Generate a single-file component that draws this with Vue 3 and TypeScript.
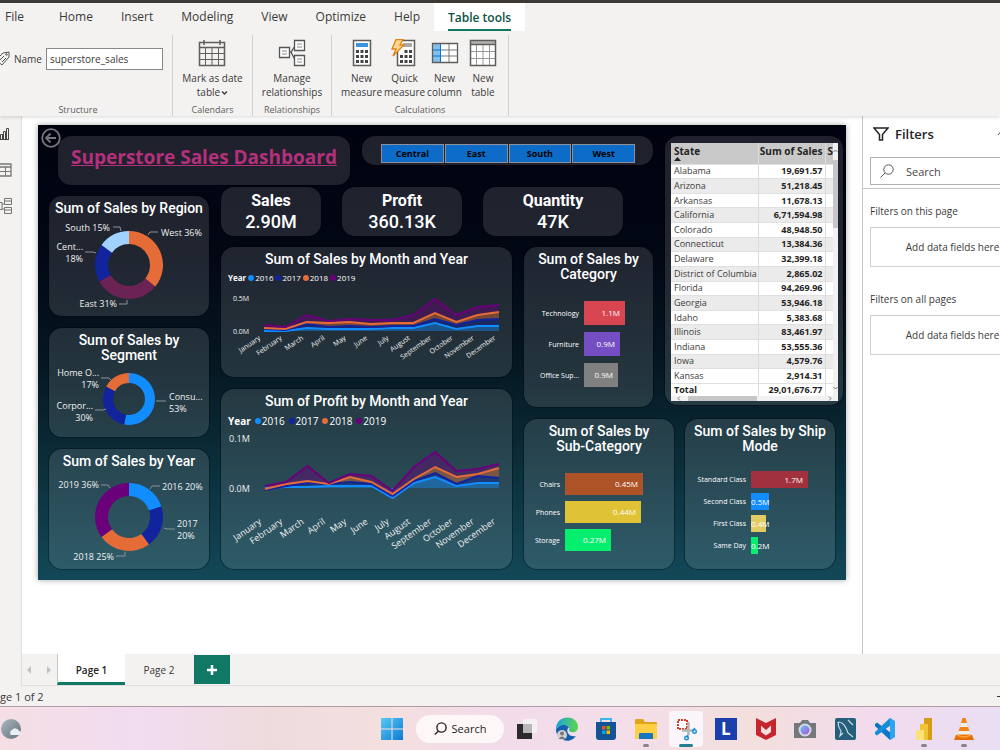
<script setup lang="ts">
interface Slice { share: number; color: string }
interface Note { x: number; y: number; text: string; anchor: 'start' | 'middle' | 'end' }
interface Donut { title: string; size: string; top: number; height: number; cy: number; outer: number; inner: number; slices: Slice[]; notes: Note[]; leaders: string[] }
interface Bar { label: string; value: string; width: number; color: string }
interface AreaChart { title: string; kind: string; top: number; height: number; x0: number; base: number; ticks: { y: number; text: string }[]; labelY: number; series: number[][] }

const tabs = ['File', 'Home', 'Insert', 'Modeling', 'View', 'Optimize', 'Help', 'Table tools']
const months = ['January', 'February', 'March', 'April', 'May', 'June', 'July', 'August', 'September', 'October', 'November', 'December']
const years = [
  { name: '2016', color: '#118dff' },
  { name: '2017', color: '#12239e' },
  { name: '2018', color: '#e66c37' },
  { name: '2019', color: '#6b007b' },
]
const regions = ['Central', 'East', 'South', 'West']
const kpis = [
  { title: 'Sales', value: '2.90M', kind: 'kpi-s' },
  { title: 'Profit', value: '360.13K', kind: 'kpi-m' },
  { title: 'Quantity', value: '47K', kind: 'kpi-l' },
]

const donuts: Donut[] = [
  {
    title: 'Sum of Sales by Region', size: 'tall', top: 20, height: 99, cy: 69, outer: 34, inner: 21,
    slices: [{ share: 36, color: '#e66c37' }, { share: 31, color: '#6b2254' }, { share: 18, color: '#12239e' }, { share: 15, color: '#a0d1ff' }],
    notes: [
      { x: 61, y: 35, text: 'South 15%', anchor: 'end' },
      { x: 112, y: 40, text: 'West 36%', anchor: 'start' },
      { x: 34, y: 54, text: 'Cent...', anchor: 'end' },
      { x: 34, y: 66, text: '18%', anchor: 'end' },
      { x: 68, y: 111, text: 'East 31%', anchor: 'end' },
    ],
    leaders: ['M64 31h7l1 4', 'M109 36h-8l-2 3', 'M36 56h8l3 1', 'M70 108h8v-4'],
  },
  {
    title: 'Sum of Sales by Segment', size: 'short', top: 35, height: 73, cy: 71, outer: 26, inner: 16,
    slices: [{ share: 53, color: '#118dff' }, { share: 30, color: '#12239e' }, { share: 17, color: '#e66c37' }],
    notes: [
      { x: 50, y: 48, text: 'Home O...', anchor: 'end' },
      { x: 50, y: 60, text: '17%', anchor: 'end' },
      { x: 120, y: 72, text: 'Consu...', anchor: 'start' },
      { x: 120, y: 84, text: '53%', anchor: 'start' },
      { x: 44, y: 81, text: 'Corpor...', anchor: 'end' },
      { x: 44, y: 93, text: '30%', anchor: 'end' },
    ],
    leaders: ['M52 50h8l2 2', 'M107 73h10', 'M46 82h8l3-1'],
  },
  {
    title: 'Sum of Sales by Year', size: 'tall', top: 20, height: 99, cy: 68, outer: 34, inner: 21,
    slices: [{ share: 20, color: '#118dff' }, { share: 20, color: '#12239e' }, { share: 25, color: '#e66c37' }, { share: 35, color: '#6b007b' }],
    notes: [
      { x: 50, y: 39, text: '2019 36%', anchor: 'end' },
      { x: 113, y: 41, text: '2016 20%', anchor: 'start' },
      { x: 128, y: 78, text: '2017', anchor: 'start' },
      { x: 128, y: 90, text: '20%', anchor: 'start' },
      { x: 65, y: 111, text: '2018 25%', anchor: 'end' },
    ],
    leaders: ['M52 36h7l2 3', 'M111 37h-8l-2 3', 'M115 79l3 1h8', 'M67 107h9v-4'],
  },
]

const areaCharts: AreaChart[] = [
  {
    title: 'Sum of Sales by Month and Year', kind: 'compact', top: 38, height: 91, x0: 43, base: 84, labelY: 92,
    ticks: [{ y: 54, text: '0.5M' }, { y: 87, text: '0.0M' }],
    series: [
      [84, 84, 81, 82, 82, 82, 81, 81, 76, 82, 79, 79],
      [82, 83, 77, 80, 79, 80, 79, 79, 72, 78, 73, 72],
      [81, 82, 75, 76, 75, 77, 76, 76, 66, 75, 68, 65],
      [78, 80, 68, 74, 72, 73, 73, 68, 52, 68, 60, 58],
    ],
  },
  {
    title: 'Sum of Profit by Month and Year', kind: 'roomy', top: 40, height: 139, x0: 44, base: 99, labelY: 134,
    ticks: [{ y: 53, text: '0.1M' }, { y: 103, text: '0.0M' }],
    series: [
      [99, 98, 98, 97, 97, 97, 109, 94, 88, 97, 94, 94],
      [101, 97, 94, 95, 93, 95, 107, 92, 84, 95, 87, 89],
      [100, 95, 92, 95, 88, 93, 105, 90, 78, 88, 85, 79],
      [97, 93, 77, 94, 85, 87, 102, 78, 63, 82, 80, 75],
    ],
  },
]

const categoryBars: Bar[] = [
  { label: 'Technology', value: '1.1M', width: 41, color: '#d64550' },
  { label: 'Furniture', value: '0.9M', width: 36, color: '#744ec2' },
  { label: 'Office Sup...', value: '0.9M', width: 34, color: '#808080' },
]
const subBars: Bar[] = [
  { label: 'Chairs', value: '0.45M', width: 78, color: '#ae5228' },
  { label: 'Phones', value: '0.44M', width: 76, color: '#dfc235' },
  { label: 'Storage', value: '0.27M', width: 46, color: '#05ee6e' },
]
const shipBars: Bar[] = [
  { label: 'Standard Class', value: '1.7M', width: 57, color: '#a0313d' },
  { label: 'Second Class', value: '0.5M', width: 18, color: '#118dff' },
  { label: 'First Class', value: '0.4M', width: 15, color: '#e3cb64' },
  { label: 'Same Day', value: '0.2M', width: 7, color: '#05ee6e' },
]

const states: [string, string][] = [
  ['Alabama', '19,691.57'], ['Arizona', '51,218.45'], ['Arkansas', '11,678.13'], ['California', '6,71,594.98'],
  ['Colorado', '48,948.50'], ['Connecticut', '13,384.36'], ['Delaware', '32,399.18'], ['District of Columbia', '2,865.02'],
  ['Florida', '94,269.96'], ['Georgia', '53,946.18'], ['Idaho', '5,383.68'], ['Illinois', '83,461.97'],
  ['Indiana', '53,555.36'], ['Iowa', '4,579.76'], ['Kansas', '2,914.31'],
]

function ring(d: Donut) {
  const total = d.slices.reduce((a, s) => a + s.share, 0)
  let at = 0
  return d.slices.map((s) => {
    const a = (at / total) * Math.PI * 2
    at += s.share
    const b = (at / total) * Math.PI * 2
    const p = (r: number, t: number) => `${(80 + r * Math.sin(t)).toFixed(2)} ${(d.cy - r * Math.cos(t)).toFixed(2)}`
    const big = b - a > Math.PI ? 1 : 0
    return {
      color: s.color,
      path: `M${p(d.outer, a)}A${d.outer} ${d.outer} 0 ${big} 1 ${p(d.outer, b)}L${p(d.inner, b)}A${d.inner} ${d.inner} 0 ${big} 0 ${p(d.inner, a)}Z`,
    }
  })
}

const monthX = (c: AreaChart, i: number) => c.x0 + (i * (278 - c.x0)) / 11
const line = (c: AreaChart, ys: number[]) => ys.map((y, i) => `${monthX(c, i).toFixed(1)},${y}`).join(' ')
function band(c: AreaChart, n: number) {
  const floor = n === 0 ? c.series[0].map(() => c.base) : c.series[n - 1]
  const back = floor.map((y, i) => `${monthX(c, i).toFixed(1)},${y}`).reverse().join(' ')
  return `${line(c, c.series[n])} ${back}`
}
</script>

<template>
  <div class="app">
    <header class="ribbon">
      <nav class="tabs">
        <button v-for="t in tabs" :key="t" type="button" class="tab" :class="{ active: t === 'Table tools', first: t === 'File' }"><span>{{ t }}</span></button>
      </nav>
      <div class="tools">
        <section class="group structure">
          <div class="name-row">
            <svg class="tag" width="10" height="16" viewBox="0 0 10 16" fill="none" stroke="#555"><path d="M-4 9 3 2 9 1 9 6 2 14Z" /><path d="M0 9 4 5M2 11 6 7" /><circle cx="6.500" cy="3.500" r=".8" /></svg>
            <label for="table-name">Name</label>
            <input id="table-name" type="text" value="superstore_sales">
          </div>
          <h2>Structure</h2>
        </section>
        <section class="group calendars">
          <div class="cmds">
            <button type="button" class="cmd">
              <svg width="28" height="28" viewBox="0 0 28 28" fill="none" stroke="#605e5c"><path stroke-width="1.500" d="M1.500 3.500h25v23h-25zM1.500 8.500h25M6 1v5M22 1v5" /><path d="M7.500 9v17M14 9v17M20.500 9v17M2 14.500h24M2 20.500h24" /></svg>
              <span>Mark as date<br>table<svg class="chev" width="7" height="6" viewBox="0 0 7 6" fill="none" stroke="#444" stroke-width="1.500"><path d="m1 1.500 2.500 2.500L6 1.500" /></svg></span>
            </button>
          </div>
          <h2>Calendars</h2>
        </section>
        <section class="group relations">
          <div class="cmds">
            <button type="button" class="cmd">
              <svg width="28" height="28" viewBox="0 0 28 28" fill="#fff" stroke="#555" stroke-width="1.300"><path fill="none" d="M11 13h2l4-6M13 13l4 8" /><path d="M1.500 8.500h10v10h-10zM16.500 1.500h10v10h-10zM16.500 16.500h10v10h-10z" /><path stroke="#888" stroke-width="1" d="M4 12h5M4 15h5M19 5h5M19 8h5M19 20h5M19 23h5" /></svg>
              <span>Manage<br>relationships</span>
            </button>
          </div>
          <h2>Relationships</h2>
        </section>
        <section class="group calcs">
          <div class="cmds">
            <button type="button" class="cmd">
              <svg width="28" height="28" viewBox="0 0 28 28"><path d="M5.500 1.500h17v25h-17z" fill="#fff" stroke="#605e5c" stroke-width="1.500" /><path d="M8 4h12v4H8z" fill="#3a96dd" /><g fill="#444"><path d="M8 11h3v3H8zM12.500 11h3v3h-3zM17 11h3v3h-3zM8 16h3v3H8zM12.500 16h3v3h-3zM17 16h3v3h-3zM8 21h3v3H8zM12.500 21h3v3h-3zM17 21h3v3h-3z" /></g></svg>
              <span>New<br>measure</span>
            </button>
            <button type="button" class="cmd">
              <svg width="28" height="28" viewBox="0 0 28 28"><path d="M6.500 1.500h17v25h-17z" fill="#fff" stroke="#605e5c" stroke-width="1.500" /><path d="M12 4h9v4h-9z" fill="#aaa" /><g fill="#444"><path d="M9 16h3v3H9zM13.500 11h3v3h-3zM18 11h3v3h-3zM13.500 16h3v3h-3zM18 16h3v3h-3zM9 21h3v3H9zM13.500 21h3v3h-3zM18 21h3v3h-3z" /></g><path d="M5 .500h7L9 6h4L2 17l3-7H1z" fill="#fdd692" stroke="#e08010" stroke-width="1.300" /></svg>
              <span>Quick<br>measure</span>
            </button>
            <button type="button" class="cmd">
              <svg width="28" height="28" viewBox="0 0 28 28"><path d="M1.500 4.500h25v19h-25z" fill="#fff" /><path d="M2 5h8v18H2z" fill="#83beec" /><path d="M2 11h8M2 17h8M9.500 5v18" stroke="#0078d4" fill="none" /><path d="M10 11h16M10 17h16M18 5v18" stroke="#777" fill="none" /><path d="M1.500 4.500h25v19h-25z" fill="none" stroke="#605e5c" stroke-width="1.300" /></svg>
              <span>New<br>column</span>
            </button>
            <button type="button" class="cmd">
              <svg width="28" height="28" viewBox="0 0 28 28"><path d="M1.500 1.500h25v25h-25z" fill="#fff" /><path d="M2 2h24v3H2z" fill="#b5b3b1" /><path d="M7.500 6v20M14 6v20M20.500 6v20M2 12.500h24M2 19.500h24" stroke="#999" fill="none" /><path d="M1.500 1.500h25v25h-25zM1.500 5.500h25" fill="none" stroke="#605e5c" stroke-width="1.500" /></svg>
              <span>New<br>table</span>
            </button>
          </div>
          <h2>Calculations</h2>
        </section>
      </div>
    </header>

    <div class="work">
      <aside class="rail">
        <button type="button" aria-label="Report view"><svg width="10" height="14" viewBox="0 0 10 14" fill="none" stroke="#444"><path d="M0 12.500h9M.500 12V7.500h2V12M3.500 12V4.500h2V12M6.500 12V1.500h2V12" /></svg></button>
        <button type="button" aria-label="Table view"><svg width="12" height="14" viewBox="0 0 12 14" fill="none" stroke="#777"><path stroke-width="1.300" d="M-1 1h12v12H-1M-1 4h12" /><path d="M0 8.500h11M5.500 4v9" /></svg></button>
        <button type="button" aria-label="Model view"><svg width="12" height="18" viewBox="0 0 12 18" fill="none" stroke="#777"><path d="M4.500 1.500h7v6h-7zM4.500 10.500h7v6h-7zM4.500 4h7M4.500 13h7M-1 5.500h3v7h-3M2 7h2M2 12h2" /></svg></button>
      </aside>
      <div class="center">
        <div class="desk">
          <div class="stage">
            <main class="report">
              <button type="button" class="back" aria-label="Back"><svg width="20" height="20" viewBox="0 0 20 20" fill="none" stroke="#77767c" stroke-width="1.800"><circle cx="10" cy="10" r="8.800" /><path d="M15 10H5M9.500 5.500 5 10l4.500 4.500" /></svg></button>
              <div class="head">
                <div class="card banner"><h1>Superstore Sales Dashboard</h1></div>
                <div class="card slicer"><button v-for="r in regions" :key="r" type="button">{{ r }}</button></div>
              </div>
              <div class="donuts">
                <section v-for="d in donuts" :key="d.title" class="card" :class="d.size">
                  <h3>{{ d.title }}</h3>
                  <svg :viewBox="`0 ${d.top} 160 ${d.height}`" class="plot">
                    <path v-for="s in ring(d)" :key="s.path" :d="s.path" :fill="s.color" />
                    <path v-for="l in d.leaders" :key="l" :d="l" fill="none" stroke="#8c9299" />
                    <text v-for="n in d.notes" :key="n.text + n.y" :x="n.x" :y="n.y" :text-anchor="n.anchor">{{ n.text }}</text>
                  </svg>
                </section>
              </div>
              <div class="kpis">
                <section v-for="k in kpis" :key="k.title" class="card kpi" :class="k.kind"><h3>{{ k.title }}</h3><p>{{ k.value }}</p></section>
              </div>
              <div class="areas">
                <section v-for="c in areaCharts" :key="c.title" class="card" :class="c.kind">
                  <h3>{{ c.title }}</h3>
                  <ul class="legend"><li><b>Year</b></li><li v-for="y in years" :key="y.name"><svg width="6" height="6" viewBox="0 0 6 6"><circle cx="3" cy="3" r="3" :fill="y.color" /></svg>{{ y.name }}</li></ul>
                  <svg :viewBox="`0 ${c.top} 291 ${c.height}`" class="plot">
                    <polygon v-for="(y, n) in years" :key="y.name" :points="band(c, n)" :fill="y.color" fill-opacity=".42" />
                    <polyline v-for="(y, n) in years" :key="y.color" :points="line(c, c.series[n])" fill="none" :stroke="y.color" stroke-width="2" />
                    <text v-for="t in c.ticks" :key="t.text" :x="c.kind === 'compact' ? 12 : 8" :y="t.y">{{ t.text }}</text>
                    <text v-for="(m, i) in months" :key="m" text-anchor="end" :transform="`translate(${monthX(c, i) - 3} ${c.labelY}) rotate(-35)`">{{ m }}</text>
                  </svg>
                </section>
              </div>
              <section class="card category">
                <h3>Sum of Sales by Category</h3>
                <ul class="bars"><li v-for="b in categoryBars" :key="b.label"><span class="lab">{{ b.label }}</span><span class="bar" :style="{ width: b.width + 'px', background: b.color }">{{ b.value }}</span></li></ul>
              </section>
              <div class="lower">
                <section class="card sub">
                  <h3>Sum of Sales by<br>Sub-Category</h3>
                  <ul class="bars"><li v-for="b in subBars" :key="b.label"><span class="lab">{{ b.label }}</span><span class="bar" :style="{ width: b.width + 'px', background: b.color }">{{ b.value }}</span></li></ul>
                </section>
                <section class="card ship">
                  <h3>Sum of Sales by Ship Mode</h3>
                  <ul class="bars"><li v-for="b in shipBars" :key="b.label"><span class="lab">{{ b.label }}</span><span class="bar" :class="{ thin: b.width < 20 }" :style="{ width: b.width + 'px', background: b.color }">{{ b.value }}</span></li></ul>
                </section>
              </div>
              <div class="card grid-card">
                <div class="grid-box">
                  <div class="grid-row">
                    <div class="grid-view">
                      <table>
                        <thead><tr><th class="state">State<svg width="7" height="4" viewBox="0 0 7 4"><path d="M0 4 3.500 0 7 4Z" fill="#222" /></svg></th><th class="num">Sum of Sales</th><th class="cut">S</th></tr></thead>
                        <tbody><tr v-for="s in states" :key="s[0]"><td>{{ s[0] }}</td><td class="num">{{ s[1] }}</td><td></td></tr></tbody>
                        <tfoot><tr><td>Total</td><td class="num">29,01,676.77</td><td></td></tr></tfoot>
                      </table>
                    </div>
                    <div class="vbar"><svg width="5" height="6" viewBox="0 0 5 6" fill="none" stroke="#777"><path d="m.500 4 2-2 2 2" /></svg><i></i><svg width="5" height="6" viewBox="0 0 5 6" fill="none" stroke="#777"><path d="m.500 2 2 2 2-2" /></svg></div>
                  </div>
                  <div class="hbar"><svg width="6" height="5" viewBox="0 0 6 5" fill="none" stroke="#777"><path d="m4 .500-2 2 2 2" /></svg><i></i><svg width="6" height="5" viewBox="0 0 6 5" fill="none" stroke="#777"><path d="m2 .500 2 2-2 2" /></svg></div>
                </div>
              </div>
            </main>
          </div>
          <aside class="filters">
            <div class="filters-in">
              <div class="f-head">
                <svg width="16" height="15" viewBox="0 0 16 15" fill="none" stroke="#252423" stroke-width="1.500"><path d="M1 1h14L9.500 7.500V13h-3V7.500Z" /></svg>
                <h2>Filters</h2>
                <svg class="f-more" width="12" height="8" viewBox="0 0 12 8" fill="none" stroke="#555"><path d="M1 5q5-8 10 0" /></svg>
              </div>
              <label class="f-search"><svg width="14" height="14" viewBox="0 0 14 14" fill="none" stroke="#555"><circle cx="8.500" cy="5.500" r="4.700" /><path d="M5 9 .500 13.500" /></svg><input type="text" placeholder="Search" aria-label="Search filters"></label>
              <h4>Filters on this page</h4>
              <div class="drop">Add data fields here</div>
              <h4>Filters on all pages</h4>
              <div class="drop">Add data fields here</div>
            </div>
          </aside>
        </div>
        <nav class="pages">
          <button type="button" class="nav" aria-label="Previous page"><svg width="4" height="8" viewBox="0 0 4 8"><path d="M4 0v8L0 4Z" fill="#c3c1c4" /></svg></button>
          <button type="button" class="nav" aria-label="Next page"><svg width="4" height="8" viewBox="0 0 4 8"><path d="M0 0v8l4-4Z" fill="#c3c1c4" /></svg></button>
          <button type="button" class="page on">Page 1</button>
          <button type="button" class="page">Page 2</button>
          <button type="button" class="add" aria-label="New page"><svg width="10" height="10" viewBox="0 0 10 10"><path d="M5 0v10M0 5h10" stroke="#fff" stroke-width="2.500" /></svg></button>
        </nav>
      </div>
    </div>

    <footer class="status"><span>ge 1 of 2</span><span class="minus"></span></footer>

    <div class="taskbar">
      <svg class="weather" width="22" height="22" viewBox="0 0 22 22"><defs><linearGradient id="w" x2="1" y2="1"><stop stop-color="#aab8c0" /><stop offset="1" stop-color="#65717a" /></linearGradient></defs><circle cx="11" cy="11" r="10" fill="url(#w)" /><path d="M11 17a3 3 0 0 1 1-5 4 4 0 0 1 7 1 2 2 0 0 1 0 4Z" fill="#e8f0f5" /></svg>
      <button type="button" class="start" aria-label="Start"><svg width="22" height="22" viewBox="0 0 22 22"><defs><linearGradient id="win" x2="1" y2="1"><stop stop-color="#5bc8f5" /><stop offset="1" stop-color="#0a7bd4" /></linearGradient></defs><path d="M0 0h10.500v10.500H0zM11.500 0H22v10.500H11.500zM0 11.500h10.500V22H0zM11.500 11.500H22V22H11.500z" fill="url(#win)" /></svg></button>
      <button type="button" class="find"><svg width="13" height="13" viewBox="0 0 13 13" fill="none" stroke="#222" stroke-width="1.400"><circle cx="7.500" cy="5.500" r="4.600" /><path d="M4.500 9 .800 12.500" /></svg>Search</button>
      <div class="icons">
        <button type="button" aria-label="Task view"><svg width="24" height="24" viewBox="0 0 24 24"><path d="M2 7h15v15H2z" fill="#2b2b2b" /><path d="M8 2h14v14H8z" fill="#f4f2f2" fill-opacity=".85" /><path d="M8 7h9v9H8z" fill="#b9b7b7" /></svg></button>
        <button type="button" aria-label="Edge"><svg width="24" height="24" viewBox="0 0 24 24"><defs><linearGradient id="e1" x2="1"><stop stop-color="#1aa0e0" /><stop offset="1" stop-color="#5fd64a" /></linearGradient></defs><path d="M1 12a11 11 0 0 0 20 7q-6 1-8-3-2-3 1-6L8 6Z" fill="#1260ae" /><path d="M1 12C1-3 23-3 23 10c0 7-9 6-9 3 2-5-7-8-13-1Z" fill="url(#e1)" /><circle cx="7" cy="18" r="5" fill="#d2d0d0" /><circle cx="7" cy="16.500" r="2" fill="#777" /><path d="M3.500 22q3.500-5 7 0Z" fill="#777" /></svg></button>
        <button type="button" aria-label="Store"><svg width="24" height="24" viewBox="0 0 24 24"><path d="M7 6V2h10v4" fill="none" stroke="#38b6ec" stroke-width="1.800" /><path d="M2 5h20v15q0 3-3 3H5q-3 0-3-3Z" fill="#145394" /><path d="M8 9h3.500v3.500H8z" fill="#f25022" /><path d="M12.500 9H16v3.500h-3.500z" fill="#7fba00" /><path d="M8 13.500h3.500V17H8z" fill="#00a4ef" /><path d="M12.500 13.500H16V17h-3.500z" fill="#ffb900" /></svg></button>
        <button type="button" class="run" aria-label="File Explorer"><svg width="24" height="24" viewBox="0 0 24 24"><path d="M1 3q0-1 1-1h7l2 3h11q1 0 1 1v15H1Z" fill="#e0a31a" /><path d="M1 7h22v14q0 1-1 1H2q-1 0-1-1Z" fill="#fccf45" /><path d="M5 22v-5q0-1 1-1h12q1 0 1 1v5Z" fill="#1776be" /></svg></button>
        <button type="button" class="run current" aria-label="Snipping Tool"><svg width="24" height="24" viewBox="0 0 24 24" fill="none"><path d="M4 3h9v9H4z" fill="#fff" stroke="#d53b22" stroke-width="2" stroke-dasharray="2 1" /><path d="M8 13.500h10M14.500 5v13" stroke="#b2b5b8" stroke-width="2.500" /><path d="m18 14 3-3M14 18l-1 3" stroke="#1593d7" stroke-width="1.300" /><circle cx="20.500" cy="14.500" r="1.800" stroke="#1593d7" stroke-width="1.400" /><circle cx="12.500" cy="21" r="1.800" stroke="#1593d7" stroke-width="1.400" /></svg></button>
        <button type="button" aria-label="L"><span class="ell">L</span></button>
        <button type="button" aria-label="McAfee"><svg width="24" height="24" viewBox="0 0 24 24"><path d="m2 1 10 5 10-5v17l-10 5-10-5Z" fill="#c5262e" /><path d="M7 8.500 12 13l5-4.500V15l-5 3.500L7 15Z" fill="#f5dede" /></svg></button>
        <button type="button" aria-label="Camera"><svg width="24" height="24" viewBox="0 0 24 24"><defs><linearGradient id="cam" x2="1" y2="1"><stop stop-color="#64c8f5" /><stop offset="1" stop-color="#b14be0" /></linearGradient></defs><path d="M1 6h6l2-3h6l2 3h6v15H1Z" fill="#74777b" /><circle cx="12" cy="13" r="6.500" fill="#d5d9dd" /><circle cx="12" cy="13" r="4.500" fill="url(#cam)" /></svg></button>
        <button type="button" aria-label="MySQL Workbench"><svg width="24" height="24" viewBox="0 0 24 24"><rect x="2" y="1" width="21" height="22" rx="2" fill="#255f7c" /><path d="M5 5q5 0 8 6l2 5 5 4M5 5q0 5 3 9l-1 5 3-3M15 3l5 5" fill="none" stroke="#c9dce4" stroke-width="1.200" /></svg></button>
        <button type="button" aria-label="VS Code"><svg width="24" height="24" viewBox="0 0 24 24"><path d="m2 7 2-1.500L22 19l-5 4L2 9Z" fill="#0a77c4" /><path d="m2 17 2 1.500L22 5l-5-4L2 15Z" fill="#168dd8" /><path d="m17 1 5 3v16l-5 3Z" fill="#30a5ef" /></svg></button>
        <button type="button" class="run" aria-label="Power BI"><svg width="24" height="24" viewBox="0 0 24 24"><path d="M12 1h8v22h-8z" fill="#d99b14" /><path d="M8 7h8v16H8z" fill="#f0c432" /><path d="M4 13h8v10H4z" fill="#fae178" /></svg></button>
        <button type="button" class="run" aria-label="VLC"><svg width="24" height="24" viewBox="0 0 24 24"><path d="M10.500 1h3L19 20H5Z" fill="#f18412" /><path d="M9 6h6l1.200 4H7.800ZM6.600 14h10.800l1 3.500H5.600Z" fill="#eee" /><path d="M4 18h16l2 5H2Z" fill="#e46f08" /><path d="M5.500 18q6.500 4 13 0" fill="none" stroke="#faa53a" stroke-width="1.500" /></svg></button>
      </div>
    </div>
  </div>
</template>

<style>
body { margin: 0; }
</style>

<style scoped>
.app { min-height: 100vh; display: flex; flex-direction: column; overflow: hidden; background: #f3f2f1; color: #3b3a39; font-family: "Open Sans", "Noto Sans", sans-serif; font-size: 11px; }
button, input { font: inherit; color: inherit; border: 0; background: none; padding: 0; margin: 0; }
h1, h2, h3, h4, p, ul { margin: 0; padding: 0; list-style: none; font-weight: 400; }
svg { display: block; flex: none; }

.ribbon { border-top: 3px solid #3b3836; background: #f3f2f1; position: relative; z-index: 1; box-shadow: 0 1px 4px rgba(0, 0, 0, .16); }
.tabs { display: flex; height: 28px; }
.tab { padding: 0 14px; font-size: 12px; line-height: 28px; }
.tab.first { padding: 0 21px 0 5px; }
.tab.active { background: #fff; color: #0b5345; font-weight: 600; }
.tab.active span { display: block; height: 27px; box-sizing: border-box; border-bottom: 2px solid #117865; }
.tools { display: flex; height: 85px; box-sizing: border-box; padding-top: 4px; }
.group { box-sizing: border-box; border-right: 1px solid #d2d0ce; display: flex; flex-direction: column; justify-content: space-between; align-items: center; }
.group h2 { font-size: 9px; line-height: 12px; color: #605e5c; }
.structure { width: 173px; align-items: stretch; }
.structure h2 { padding-right: 16px; text-align: center; }
.name-row { display: flex; align-items: center; padding-top: 13px; font-size: 10px; }
.name-row label { margin: 0 4px; }
.name-row input { flex: 1; min-width: 0; height: 22px; box-sizing: border-box; margin-right: 9px; padding: 0 3px; border: 1px solid #8a8886; background: #fff; }
.calendars { width: 80px; }
.relations { width: 79px; }
.calcs { width: 177px; }
.cmds { display: flex; padding-top: 4px; }
.cmd { display: flex; flex-direction: column; align-items: center; gap: 4px; font-size: 10px; line-height: 14px; padding: 0 1px; }
.calcs .cmds { padding-right: 2px; }
.calcs .cmd:last-child { padding-left: 6px; }
.chev { display: inline-block; margin-left: 1px; }

.work { flex: 1; display: flex; }
.rail { width: 21px; border-right: 1px solid #e1dfdd; padding-top: 10px; display: flex; flex-direction: column; }
.rail button { height: 36px; display: flex; align-items: center; }
.rail button:first-child { height: 16px; margin-bottom: 10px; }
.center { flex: 1; min-width: 0; display: flex; flex-direction: column; }
.desk { flex: 1; display: flex; background: #fff; }
.stage { flex: 1; min-width: 0; padding: 9px 16px; }

.report { position: relative; display: grid; grid-template-columns: 160fr 291fr 129fr 178fr; column-gap: 12px; grid-template-rows: 51px 60px 172px 150px; padding: 11px 3px 11px 11px; background: linear-gradient(#010210 0%, #020714 28%, #051721 52%, #0a2b37 72%, #134858 100%); box-shadow: 0 0 6px rgba(0, 0, 0, .35); color: #fff; }
.back { position: absolute; left: 3px; top: 3px; }
.card { box-sizing: border-box; box-shadow: 0 0 0 1px rgba(0, 0, 0, .3); border-radius: 13px; background: rgba(255, 255, 255, .12); overflow: hidden; }
.card h3 { font-family: Roboto, sans-serif; font-size: 14px; line-height: 15px; font-weight: 500; text-align: center; padding: 5px 4px 0; }
.plot { width: 100%; }
.plot text { fill: #f0f0f0; font-size: 9px; }

.head { grid-column: 1 / 4; grid-row: 1; display: grid; grid-template-columns: 292fr 291fr; column-gap: 12px; align-items: start; padding-left: 9px; }
.banner { height: 49px; }
.banner h1 { font-size: 19px; line-height: 26px; padding-top: 8px; font-weight: 700; text-align: center; color: #b5307c; text-decoration: underline; white-space: nowrap; }
.slicer { height: 29px; display: flex; align-items: center; gap: 1px; padding: 5px 18px 0 19px; }
.slicer button { flex: 1; height: 19px; border: 1px solid #8d8f9b; background: #0d6cc7; color: #000; font-size: 9px; font-weight: 700; }

.donuts { grid-column: 1; grid-row: 2 / 5; display: flex; flex-direction: column; gap: 12px; padding-top: 9px; }
.tall { height: 120px; }
.short { height: 109px; }
.short h3 { padding: 5px 20px 0; }
.kpis { grid-column: 2 / 4; grid-row: 2; display: flex; gap: 21px; align-items: flex-start; padding-right: 30px; }
.kpi { height: 49px; }
.kpi-s { flex: 100; }
.kpi-m { flex: 120; }
.kpi-l { flex: 140; }
.kpi h3 { font-size: 16px; line-height: 17px; font-weight: 700; }
.kpi p { font-family: Roboto, sans-serif; font-size: 18px; line-height: 26px; font-weight: 500; text-align: center; }

.areas { grid-column: 2; grid-row: 3 / 5; display: flex; flex-direction: column; gap: 12px; }
.compact { height: 130px; }
.roomy { height: 180px; }
.legend { display: flex; align-items: center; gap: 2px; padding: 4px 7px 0; font-size: 8px; line-height: 14px; }
.legend li { display: flex; align-items: center; gap: 1px; }
.roomy .legend { gap: 4px; font-size: 10px; line-height: 16px; }
.compact .plot text { font-size: 7px; }

.category { grid-column: 3; grid-row: 3; height: 160px; }
.lower { grid-column: 3 / 5; grid-row: 4; display: flex; gap: 11px; padding-right: 8px; }
.lower .card { flex: 1; min-width: 0; height: 150px; }
.bars { display: flex; flex-direction: column; font-size: 7px; }
.bars li { display: flex; align-items: center; gap: 5px; }
.lab { text-align: right; white-space: nowrap; }
.bar { box-sizing: border-box; text-align: right; padding-right: 5px; font-size: 8px; white-space: nowrap; }
.bar.thin { padding: 0; text-align: left; }
.category .bars { padding-top: 19px; gap: 7px; }
.category .lab { width: 55px; }
.category .bar { line-height: 24px; }
.sub .bars { padding-top: 19px; gap: 6px; }
.sub .lab { width: 36px; }
.sub .bar { line-height: 22px; }
.ship .bars { padding-top: 17px; gap: 5px; }
.ship .lab { width: 61px; }
.ship .bar { line-height: 17px; }

.grid-card { grid-column: 4; grid-row: 1 / 4; height: 269px; padding: 7px 5px 7px 6px; }
.grid-box { background: #fff; color: #3b3a39; }
.grid-row { display: flex; }
.grid-view { flex: 1; min-width: 0; overflow: hidden; }
table { width: 100%; height: 253px; border-collapse: collapse; table-layout: fixed; font-size: 9px; line-height: 12px; }
th, td { box-sizing: border-box; padding: 0 2px 0 3px; text-align: left; white-space: nowrap; overflow: hidden; border-right: 1px solid #dcdcdc; }
th { background: #c9c9c9; height: 21px; padding-top: 2px; vertical-align: top; font-size: 10px; font-weight: 700; color: #252423; }
th.state { width: 87px; }
th.num { width: 67px; padding-left: 0; }
th.cut, td:last-child { padding: 2px 0 0 2px; border-right: 0; }
td { border-top: 1px solid #e0e0e0; }
tbody tr:nth-child(even) td { background: #ebebeb; }
.num { text-align: right; font-weight: 700; color: #252423; }
tfoot td { font-weight: 700; color: #252423; }
.vbar { width: 5px; background: #f1f1f1; display: flex; flex-direction: column; padding: 5px 0; box-sizing: border-box; }
.vbar i { height: 68px; background: #c6c6c6; margin: 6px 0 auto; }
.hbar { height: 5px; display: flex; background: #f1f1f1; padding: 0 5px; }
.hbar i { width: 69px; background: #c6c6c6; margin: 0 auto 0 6px; }

.filters { width: 137px; border-left: 1px solid #c8c6c4; overflow: hidden; }
.filters-in { width: 172px; }
.f-head { display: flex; align-items: center; gap: 6px; height: 36px; padding-left: 10px; }
.f-head h2 { font-size: 13px; font-weight: 600; color: #252423; width: 96px; }
.f-search { display: flex; align-items: center; gap: 12px; height: 28px; box-sizing: border-box; margin: 5px 0 3px 7px; border: 1px solid #b3b0ad; padding-left: 9px; }
.f-search input { min-width: 0; width: 100px; }
.f-search input::placeholder { color: #484644; opacity: 1; }
.filters h4 { font-size: 10px; line-height: 14px; padding: 15px 0 9px 7px; }
.f-search + h4 { border-top: 1px solid #c8c6c4; }
.drop { margin-left: 7px; height: 40px; box-sizing: border-box; border: 1px solid #d2d0ce; line-height: 39px; text-align: center; font-size: 10px; margin-bottom: 10px; }

.pages { height: 32px; box-sizing: border-box; display: flex; align-items: flex-start; background: #f3f2f1; border-bottom: 1px solid #e1dfdd; padding-left: 5px; }
.nav { width: 5px; height: 31px; display: flex; align-items: center; margin-right: 15px; }
.nav + .nav { margin-right: 5px; }
.page { width: 68px; height: 31px; font-size: 10px; }
.page.on { background: #fff; color: #252423; font-weight: 600; border-bottom: 3px solid #117865; border-left: 1px solid #c8c6c4; padding-top: 3px; box-sizing: border-box; }
.add { width: 36px; height: 29px; margin: 1px 0 0 1px; background: #117865; display: flex; align-items: center; justify-content: center; }

.status { height: 20px; display: flex; justify-content: space-between; align-items: center; border-bottom: 1px solid #b39ba8; font-size: 11px; }
.minus { width: 3px; height: 1px; background: #333; }
.taskbar { height: 43px; display: flex; align-items: center; padding-right: 16px; background: linear-gradient(90deg, #f5dfe4 0%, #f1dcf1 14%, #eedcdc 27%, #f4dfdf 38%, #f2dcea 50%, #f3deea 62%, #f3dfdc 75%, #f2dced 87%, #e9def3 100%); }
.start { margin: 0 13px 0 auto; }
.find { width: 88px; height: 28px; border-radius: 14px; background: #fdf8f7; display: flex; align-items: center; justify-content: center; gap: 5px; color: #222; }
.icons { display: flex; width: 477px; margin-left: 3px; }
.icons button { flex: 1; height: 36px; display: flex; flex-direction: column; align-items: center; justify-content: center; position: relative; }
.icons .run::after { content: ""; position: absolute; bottom: 0; width: 6px; height: 3px; border-radius: 2px; background: #8b838c; }
.icons .current { flex: none; width: 34px; margin: 0 3px; background: #faf5fa; border-radius: 4px; }
.icons .current::after { width: 14px; background: #237f91; }
.ell { width: 22px; height: 22px; background: #1c3fae; color: #fff; font-size: 17px; line-height: 22px; font-weight: 700; }
.weather { flex: none; }
</style>
